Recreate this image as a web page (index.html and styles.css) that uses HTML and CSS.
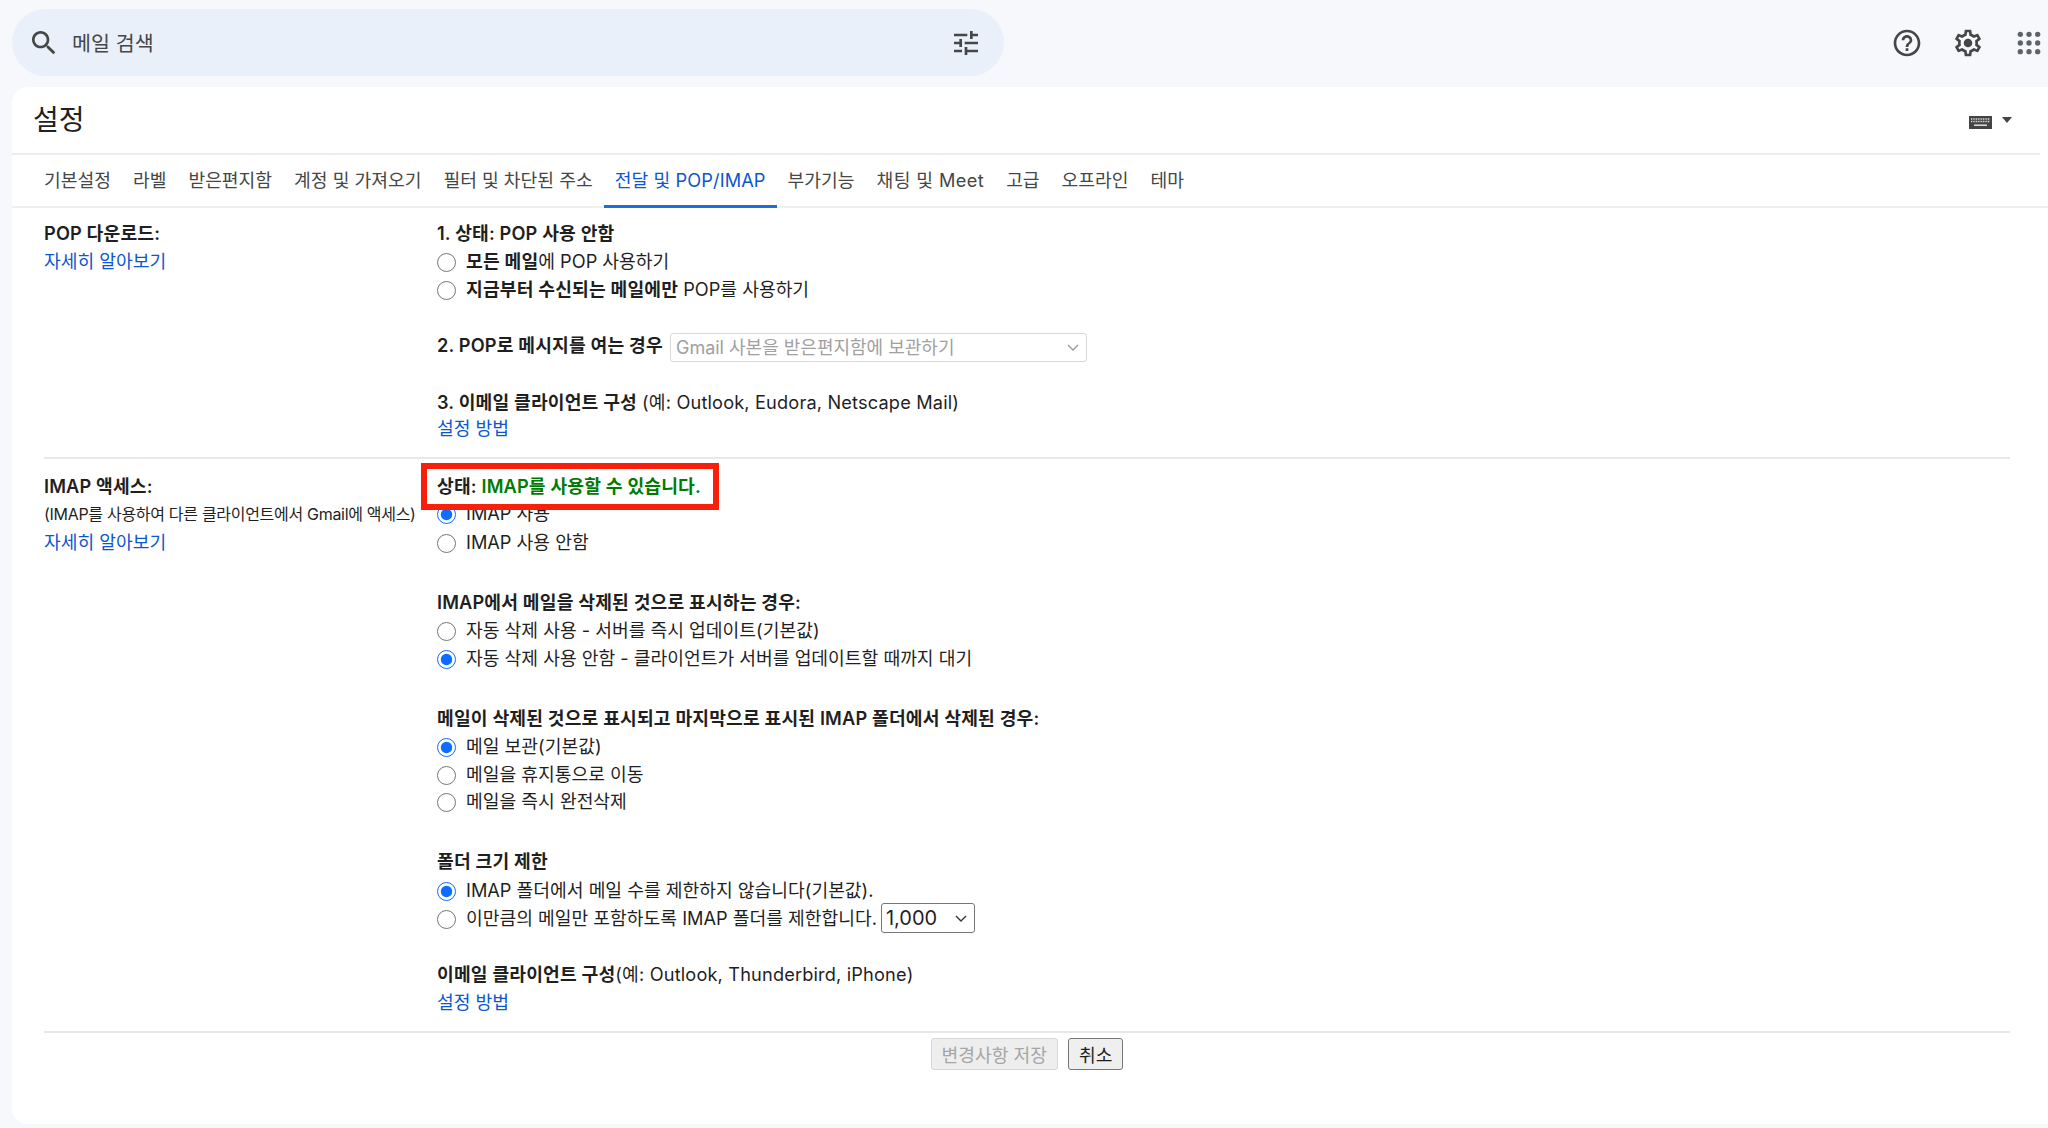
FILE: index.html
```html
<!DOCTYPE html>
<html lang="ko">
<head>
<meta charset="utf-8">
<title>설정 - Gmail</title>
<link rel="stylesheet" href="styles.css">
</head>
<body>
<header class="topbar">
  <div class="search">
    <svg class="icon" viewBox="0 0 24 24"><path d="M15.5 14h-.79l-.28-.27C15.41 12.59 16 11.11 16 9.5 16 5.91 13.09 3 9.5 3S3 5.91 3 9.5 5.91 16 9.5 16c1.61 0 3.09-.59 4.23-1.57l.27.28v.79l5 4.99L20.49 19l-4.99-5zm-6 0C7.01 14 5 11.99 5 9.5S7.01 5 9.5 5 14 7.01 14 9.5 11.99 14 9.5 14z"/></svg>
    <span class="search-text">메일 검색</span>
    <svg class="icon" viewBox="0 0 24 24"><path d="M3 17v2h6v-2H3zM3 5v2h10V5H3zm10 16v-2h8v-2h-8v-2h-2v6h2zM7 9v2H3v2h4v2h2V9H7zm14 4v-2H11v2h10zm-6-4h2V7h4V5h-4V3h-2v6z"/></svg>
  </div>
  <div class="actions">
    <svg class="icon" viewBox="0 0 24 24"><path d="M11 18h2v-2h-2v2zm1-16C6.48 2 2 6.48 2 12s4.48 10 10 10 10-4.48 10-10S17.52 2 12 2zm0 18c-4.41 0-8-3.59-8-8s3.59-8 8-8 8 3.59 8 8-3.59 8-8 8zm0-14c-2.21 0-4 1.79-4 4h2c0-1.1.9-2 2-2s2 .9 2 2c0 2-3 1.75-3 5h2c0-2.25 3-2.5 3-5 0-2.21-1.79-4-4-4z"/></svg>
    <svg class="icon" viewBox="0 0 24 24"><path d="M19.43 12.98c.04-.32.07-.64.07-.98 0-.34-.03-.66-.07-.98l2.11-1.65c.19-.15.24-.42.12-.64l-2-3.46c-.09-.16-.26-.25-.44-.25-.06 0-.12.01-.17.03l-2.49 1c-.52-.4-1.08-.73-1.69-.98l-.38-2.65C14.46 2.18 14.25 2 14 2h-4c-.25 0-.46.18-.49.42l-.38 2.65c-.61.25-1.17.59-1.69.98l-2.49-1c-.06-.02-.12-.03-.18-.03-.17 0-.34.09-.43.25l-2 3.46c-.13.22-.07.49.12.64l2.11 1.65c-.04.32-.07.65-.07.98 0 .33.03.66.07.98l-2.11 1.65c-.19.15-.24.42-.12.64l2 3.46c.09.16.26.25.44.25.06 0 .12-.01.17-.03l2.49-1c.52.4 1.08.73 1.69.98l.38 2.65c.03.24.24.42.49.42h4c.25 0 .46-.18.49-.42l.38-2.65c.61-.25 1.17-.59 1.69-.98l2.49 1c.06.02.12.03.18.03.17 0 .34-.09.43-.25l2-3.46c.12-.22.07-.49-.12-.64l-2.11-1.65zm-1.98-1.71c.04.31.05.52.05.73 0 .21-.02.43-.05.73l-.14 1.13.89.7 1.08.84-.7 1.21-1.27-.51-1.04-.42-.9.68c-.43.32-.84.56-1.25.73l-1.06.43-.16 1.13-.2 1.35h-1.4l-.19-1.35-.16-1.13-1.06-.43c-.43-.18-.83-.41-1.23-.71l-.91-.7-1.06.43-1.27.51-.7-1.21 1.08-.84.89-.7-.14-1.13c-.03-.31-.05-.54-.05-.74s.02-.43.05-.73l.14-1.13-.89-.7-1.08-.84.7-1.21 1.27.51 1.04.42.9-.68c.43-.32.84-.56 1.25-.73l1.06-.43.16-1.13.2-1.35h1.39l.19 1.35.16 1.13 1.06.43c.43.18.83.41 1.23.71l.91.7 1.06-.43 1.27-.51.7 1.21-1.07.85-.89.7.14 1.13z"/><circle cx="12" cy="12" r="3.2"/></svg>
    <svg class="icon apps" viewBox="0 0 24 24"><circle cx="5.5" cy="5.5" r="2"/><circle cx="12" cy="5.5" r="2"/><circle cx="18.5" cy="5.5" r="2"/><circle cx="5.5" cy="12" r="2"/><circle cx="12" cy="12" r="2"/><circle cx="18.5" cy="12" r="2"/><circle cx="5.5" cy="18.5" r="2"/><circle cx="12" cy="18.5" r="2"/><circle cx="18.5" cy="18.5" r="2"/></svg>
  </div>
</header>

<main class="card">
  <div class="title-row">
    <h1 class="title">설정</h1>
    <div class="kbd-tool">
      <svg class="kbd" viewBox="0 0 23 13"><rect width="23" height="13" fill="#444"/><path d="M2 3h19M2 5.5h19" stroke="#e2e2e2" stroke-width="1.3" stroke-dasharray="1 .7" fill="none"/><path d="M5 9.2h13" stroke="#e2e2e2" stroke-width="1.5" fill="none"/></svg>
      <span class="caret"></span>
    </div>
  </div>

  <nav class="tabs">
    <span class="tab">기본설정</span>
    <span class="tab">라벨</span>
    <span class="tab">받은편지함</span>
    <span class="tab">계정 및 가져오기</span>
    <span class="tab">필터 및 차단된 주소</span>
    <span class="tab active">전달 및 POP/IMAP</span>
    <span class="tab">부가기능</span>
    <span class="tab spaced">채팅 및 Meet</span>
    <span class="tab">고급</span>
    <span class="tab">오프라인</span>
    <span class="tab">테마</span>
  </nav>

  <section class="setting pop">
    <div class="label-col">
      <div class="line"><b>POP 다운로드:</b></div>
      <div class="line"><a class="link">자세히 알아보기</a></div>
    </div>
    <div class="value-col">
      <div class="line short"><b>1. 상태: POP 사용 안함</b></div>
      <label class="option"><input type="radio" name="pop"><span><b>모든 메일</b>에 POP 사용하기</span></label>
      <label class="option"><input type="radio" name="pop"><span><b>지금부터 수신되는 메일에만</b> POP를 사용하기</span></label>
      <div class="group line"><b>2. POP로 메시지를 여는 경우</b>
        <select class="select-wide" disabled><option>Gmail 사본을 받은편지함에 보관하기</option></select>
      </div>
      <div class="group line"><b>3. 이메일 클라이언트 구성</b> <span class="note">(예: Outlook, Eudora, Netscape Mail)</span></div>
      <div class="line tight"><a class="link">설정 방법</a></div>
    </div>
  </section>

  <section class="setting imap">
    <div class="label-col">
      <div class="line"><b>IMAP 액세스:</b></div>
      <div class="line small">(IMAP를 사용하여 다른 클라이언트에서 Gmail에 액세스)</div>
      <div class="line"><a class="link">자세히 알아보기</a></div>
    </div>
    <div class="value-col">
      <div class="line status-row">
        <div class="callout"><b>상태: <span class="ok">IMAP를 사용할 수 있습니다.</span></b></div>
      </div>
      <label class="option under-status"><input type="radio" name="imap" checked><span>IMAP 사용</span></label>
      <label class="option after-status"><input type="radio" name="imap"><span>IMAP 사용 안함</span></label>

      <div class="group mid line"><b>IMAP에서 메일을 삭제된 것으로 표시하는 경우:</b></div>
      <label class="option raise"><input type="radio" name="expunge"><span>자동 삭제 사용 - 서버를 즉시 업데이트(기본값)</span></label>
      <label class="option"><input type="radio" name="expunge" checked><span>자동 삭제 사용 안함 - 클라이언트가 서버를 업데이트할 때까지 대기</span></label>

      <div class="group mid line"><b>메일이 삭제된 것으로 표시되고 마지막으로 표시된 IMAP 폴더에서 삭제된 경우:</b></div>
      <label class="option raise"><input type="radio" name="trash" checked><span>메일 보관(기본값)</span></label>
      <label class="option"><input type="radio" name="trash"><span>메일을 휴지통으로 이동</span></label>
      <label class="option raise"><input type="radio" name="trash"><span>메일을 즉시 완전삭제</span></label>

      <div class="group mid line"><b>폴더 크기 제한</b></div>
      <label class="option"><input type="radio" name="limit" checked><span>IMAP 폴더에서 메일 수를 제한하지 않습니다(기본값).</span></label>
      <label class="option"><input type="radio" name="limit"><span>이만큼의 메일만 포함하도록 IMAP 폴더를 제한합니다.</span>
        <select class="select-count"><option>1,000</option></select>
      </label>

      <div class="group line"><b>이메일 클라이언트 구성</b><span class="note">(예: Outlook, Thunderbird, iPhone)</span></div>
      <div class="line"><a class="link">설정 방법</a></div>
    </div>
  </section>

  <div class="buttons">
    <button class="btn" disabled>변경사항 저장</button>
    <button class="btn">취소</button>
  </div>
</main>
</body>
</html>
```
FILE: styles.css
```css
* { box-sizing: border-box; }
html, body { height: 100%; }
body {
  margin: 0;
  background: #f6f8fc;
  color: #1f1f1f;
  font-family: Inter, "Noto Sans CJK KR", sans-serif;
  font-size: 18.2px;
  overflow: hidden;
  display: flex;
  flex-direction: column;
}
b { font-weight: 600; letter-spacing: .15px; }
.note { letter-spacing: .16px; }

.topbar {
  height: 87px;
  flex: none;
  display: flex;
  align-items: flex-start;
  justify-content: space-between;
  padding: 9px 3px 0 12px;
}
.icon { width: 32px; height: 32px; fill: #444746; flex: none; display: block; }
.search {
  width: 992px;
  height: 67px;
  border-radius: 34px;
  background: #e9f0fa;
  display: flex;
  align-items: center;
  padding: 0 22px 0 16px;
}
.search-text { flex: 1; margin: -2px 0 0 12px; font-size: 20.6px; color: #444746; }
.actions {
  display: flex;
  gap: 29px;
  padding-top: 18px;
}
.actions .apps { fill: #5f6368; }

.card {
  flex: 1;
  margin: 0 0 4px 12px;
  background: #fff;
  border-radius: 16px 0 0 16px;
  display: flex;
  flex-direction: column;
}
.title-row {
  height: 68px;
  flex: none;
  display: flex;
  align-items: center;
  justify-content: space-between;
  padding: 0 28px 4px 21px;
  margin-right: 8px;
  border-bottom: 2px solid #ececec;
}
.title { margin: 0; font-size: 28px; font-weight: 400; color: #202124; }
.kbd-tool { display: flex; align-items: flex-start; gap: 10px; padding-top: 9px; }
.kbd { width: 23px; height: 13px; display: block; }
.caret {
  width: 0;
  height: 0;
  border-left: 5.5px solid transparent;
  border-right: 5.5px solid transparent;
  border-top: 6px solid #444;
  margin-top: 1px;
}

.tabs {
  height: 53px;
  flex: none;
  display: flex;
  padding-left: 21px;
  border-bottom: 2px solid #f0f0f0;
}
.tab {
  padding: 0 11px;
  line-height: 51px;
  height: 53px;
  color: #444746;
  border-bottom: 3px solid transparent;
  white-space: nowrap;
}
.tab.active { color: #0b57d0; border-bottom-color: #1a6fdc; letter-spacing: .1px; }
.tab.spaced { letter-spacing: .4px; }

.setting {
  display: grid;
  grid-template-columns: 393px 1fr;
  margin: 0 38px 0 32px;
  border-bottom: 2px solid #e8e8e8;
}
.setting.pop { padding: 12px 0 14px; }
.setting.imap { padding: 14px 0 14px; }

.line { height: 28px; line-height: 26px; white-space: nowrap; }
.short { height: 27px; }
.small { font-size: 16px; letter-spacing: -.3px; line-height: 26px; }
.tight { margin-top: -2px; }
.group { margin-top: 29px; }
.group.mid { margin-top: 33px; }
.link { color: #0b57d0; }
.ok { color: #007b00; }

.option { display: flex; align-items: center; height: 28px; white-space: nowrap; }
.option input {
  width: 19px;
  height: 19px;
  margin: 3px 10px 0 0;
  accent-color: #0b6efd;
  flex: none;
}
.option span { margin-top: -2px; }
.under-status { margin-top: -2px; }
.after-status { margin-top: 1px; }
.raise { margin-top: -1px; }

.status-row { position: relative; }
.callout {
  position: absolute;
  left: -16px;
  top: -10px;
  width: 298px;
  height: 47px;
  line-height: 35px;
  padding-left: 10px;
  background: #fff;
  border: 6px solid #f8200a;
  z-index: 1;
}

select {
  font-family: inherit;
  vertical-align: middle;
  border-radius: 3px;
  appearance: none;
  background: #fff no-repeat right 5px center / 16px 16px;
}
.select-wide {
  width: 417px;
  height: 29px;
  margin: 0 0 0 2px;
  padding: 0 5px;
  font-size: 18px;
  color: #a0a0a0;
  border: 1px solid #d8d8d8;
  opacity: 1;
  background-image: url("data:image/svg+xml,%3Csvg xmlns='http://www.w3.org/2000/svg' viewBox='0 0 16 16'%3E%3Cpath d='M3 6l5 5 5-5' fill='none' stroke='%23999' stroke-width='1.3'/%3E%3C/svg%3E");
}
.select-count {
  width: 94px;
  height: 30px;
  margin-left: 4px;
  padding: 0 4px;
  font-size: 20px;
  color: #1f1f1f;
  border: 1px solid #767676;
  background-image: url("data:image/svg+xml,%3Csvg xmlns='http://www.w3.org/2000/svg' viewBox='0 0 16 16'%3E%3Cpath d='M3 6l5 5 5-5' fill='none' stroke='%23333' stroke-width='1.4'/%3E%3C/svg%3E");
}

.buttons {
  margin: 5px 38px 0 32px;
  display: flex;
  justify-content: center;
  gap: 10px;
}
.btn {
  height: 32px;
  padding: 0 10px;
  font: inherit;
  color: #1f1f1f;
  background: #efefef;
  border: 1px solid #767676;
  border-radius: 3px;
}
.btn:disabled {
  color: #a6a6a6;
  background: #eee;
  border-color: #d6d6d6;
}
```
